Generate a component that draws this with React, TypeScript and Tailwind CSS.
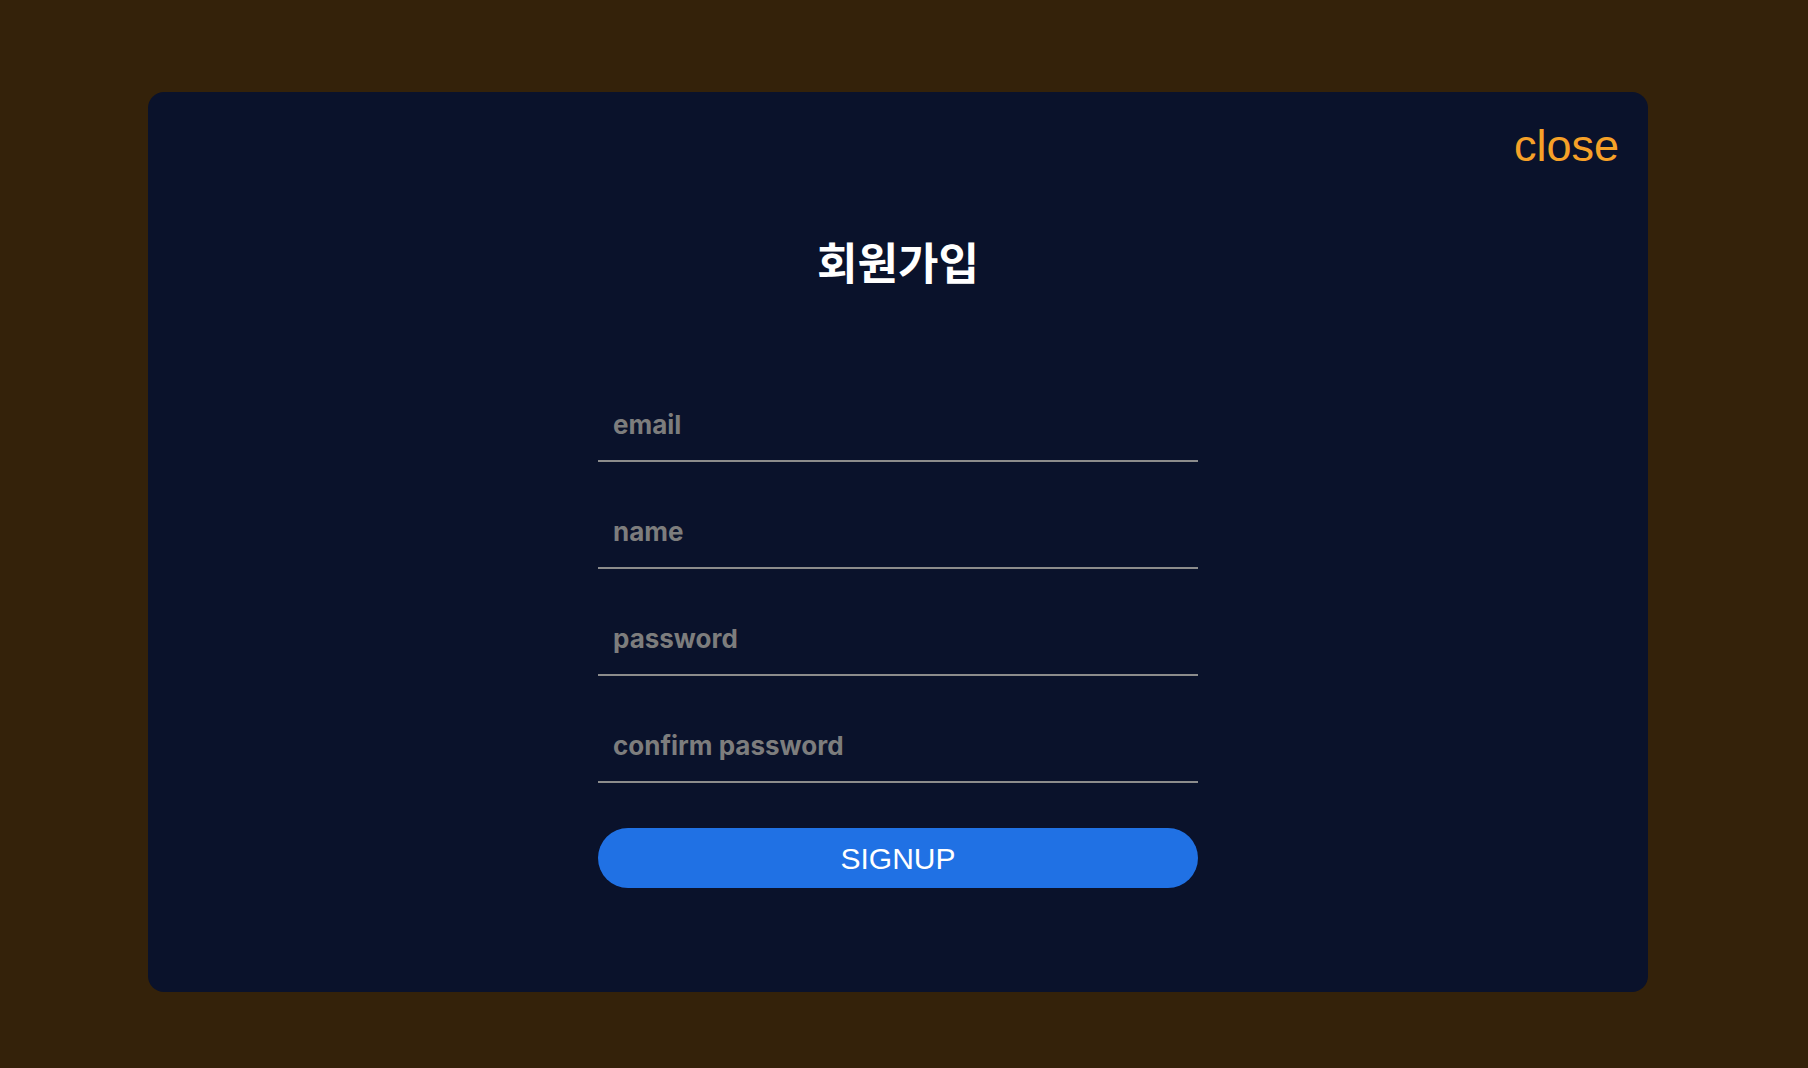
import { useState } from 'react';

const fields = [
    { name: 'email', type: 'email', placeholder: 'email' },
    { name: 'name', type: 'text', placeholder: 'name' },
    { name: 'password', type: 'password', placeholder: 'password' },
    { name: 'confirm', type: 'password', placeholder: 'confirm password' },
];

export default function App() {
    const [values, setValues] = useState<Record<string, string>>({});

    return (
        <div className="min-h-screen w-full bg-[#34220a] pt-[92px] pl-[148px]">
            <div className="w-[1500px] h-[900px] rounded-[16px] bg-[#0a122b] flex flex-col">
                {/* close */}
                <div className="flex justify-end pt-[31px] pr-[29px]">
                    <button className="text-[45px] leading-[46px] text-[#f6a128] font-['Liberation_Sans',Arial,sans-serif]">
                        close
                    </button>
                </div>

                <h1 className="mt-[70px] text-center text-[44px] leading-[44px] font-bold text-white font-['Noto_Sans_CJK_KR','Noto_Sans',sans-serif]">
                    회원가입
                </h1>

                <form
                    className="mt-[117px] w-[600px] mx-auto flex flex-col gap-[45px]"
                    onSubmit={(e) => e.preventDefault()}
                >
                    {fields.map((f) => (
                        <input
                            key={f.name}
                            type={f.type}
                            placeholder={f.placeholder}
                            value={values[f.name] ?? ''}
                            onChange={(e) => setValues({ ...values, [f.name]: e.target.value })}
                            className="h-[62px] pb-[12px] pl-[15px] bg-transparent border-b-2 border-[#8c8c8c] outline-none text-[26px] font-bold text-white placeholder:text-[#7d7d7d] font-['Inter',sans-serif]"
                        />
                    ))}
                </form>

                <button className="mt-[45px] w-[600px] h-[60px] mx-auto rounded-full bg-[#2071e4] text-white text-[30px] font-['Liberation_Sans',Arial,sans-serif]">
                    SIGNUP
                </button>
            </div>
        </div>
    );
}
